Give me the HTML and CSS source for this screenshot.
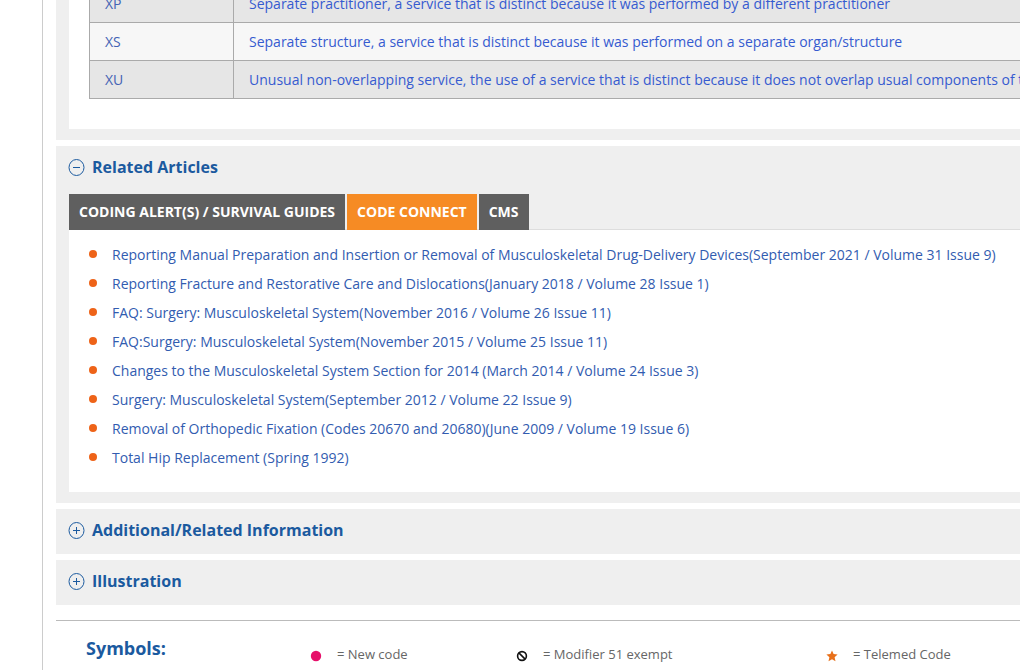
FILE: index.html
```html
<!DOCTYPE html>
<html lang="en">
<head>
<meta charset="utf-8">
<title>Code details</title>
<link rel="stylesheet" href="styles.css">
</head>
<body>
<main class="page">
  <section class="section modifiers">
    <div class="panel table-panel">
      <table class="modifier-table">
        <tbody>
          <tr><td class="code"><a href="#">XP</a></td><td><a href="#">Separate practitioner, a service that is distinct because it was performed by a different practitioner</a></td></tr>
          <tr><td class="code"><a href="#">XS</a></td><td><a href="#">Separate structure, a service that is distinct because it was performed on a separate organ/structure</a></td></tr>
          <tr><td class="code"><a href="#">XU</a></td><td><a href="#">Unusual non-overlapping service, the use of a service that is distinct because it does not overlap usual components of the main service</a></td></tr>
        </tbody>
      </table>
    </div>
  </section>

  <section class="section articles">
    <h2 class="heading"><button class="toggle" type="button" aria-expanded="true">
      <svg class="toggle-icon" viewBox="0 0 17 18" aria-hidden="true"><ellipse cx="8.5" cy="9.500" rx="7.500" ry="8"/><path d="M5 9.500h7"/></svg>Related Articles</button></h2>
    <div class="tabs" role="tablist">
      <button class="tab" type="button" role="tab">CODING ALERT(S) / SURVIVAL GUIDES</button>
      <button class="tab active" type="button" role="tab" aria-selected="true">CODE CONNECT</button>
      <button class="tab" type="button" role="tab">CMS</button>
    </div>
    <div class="panel article-panel">
      <ul class="article-list">
        <li><a href="#">Reporting Manual Preparation and Insertion or Removal of Musculoskeletal Drug-Delivery Devices(September 2021 / Volume 31 Issue 9)</a></li>
        <li><a href="#">Reporting Fracture and Restorative Care and Dislocations(January 2018 / Volume 28 Issue 1)</a></li>
        <li><a href="#">FAQ: Surgery: Musculoskeletal System(November 2016 / Volume 26 Issue 11)</a></li>
        <li><a href="#">FAQ:Surgery: Musculoskeletal System(November 2015 / Volume 25 Issue 11)</a></li>
        <li><a href="#">Changes to the Musculoskeletal System Section for 2014 (March 2014 / Volume 24 Issue 3)</a></li>
        <li><a href="#">Surgery: Musculoskeletal System(September 2012 / Volume 22 Issue 9)</a></li>
        <li><a href="#">Removal of Orthopedic Fixation (Codes 20670 and 20680)(June 2009 / Volume 19 Issue 6)</a></li>
        <li><a href="#">Total Hip Replacement (Spring 1992)</a></li>
      </ul>
    </div>
  </section>

  <section class="section collapsed">
    <h2 class="heading"><button class="toggle" type="button" aria-expanded="false">
      <svg class="toggle-icon" viewBox="0 0 17 18" aria-hidden="true"><ellipse cx="8.5" cy="9.500" rx="7.500" ry="8"/><path d="M5 9.500h7M8.500 6v7"/></svg>Additional/Related Information</button></h2>
  </section>

  <section class="section collapsed">
    <h2 class="heading"><button class="toggle" type="button" aria-expanded="false">
      <svg class="toggle-icon" viewBox="0 0 17 18" aria-hidden="true"><ellipse cx="8.5" cy="9.500" rx="7.500" ry="8"/><path d="M5 9.500h7M8.500 6v7"/></svg>Illustration</button></h2>
  </section>

  <footer class="symbols">
    <h3 class="symbols-title">Symbols:</h3>
    <ul class="legend">
      <li><svg class="symbol" viewBox="0 0 12 12" aria-hidden="true"><circle cx="6" cy="6" r="5.2" fill="#e6106a"/></svg>= New code</li>
      <li><svg class="symbol" viewBox="0 0 12 12" aria-hidden="true"><g fill="none" stroke="#111" stroke-width="1.6"><circle cx="6" cy="6" r="4.4"/><path d="M2.9 2.9l6.2 6.2"/></g></svg>= Modifier 51 exempt</li>
      <li><svg class="symbol" viewBox="0 0 12 12" aria-hidden="true"><path fill="#e8701a" d="M6 .5l1.600 3.600 4 .4-3 2.700.9 4L6 9.200l-3.500 2 .9-4-3-2.700 4-.4z"/></svg>= Telemed Code</li>
    </ul>
  </footer>
</main>
</body>
</html>
```
FILE: styles.css
```css
* {
  box-sizing: border-box;
}

body {
  display: flow-root;
  margin: 0;
  height: 100vh;
  overflow: hidden;
  background: #fff;
  color: #666;
  font: 14px/20px "Open Sans", "Noto Sans", sans-serif;
}

a {
  color: #325cb0;
  text-decoration: none;
}

ul {
  list-style: none;
  margin: 0;
  padding: 0;
}

.page {
  display: flow-root;
  margin-left: 42px;
  padding-left: 13px;
  border-left: 1px solid #ccc;
  min-height: 100%;
}

.section {
  background: #efefef;
  padding-left: 13px;
  margin-bottom: 6px;
}

.modifiers {
  margin-top: -16px;
  padding-bottom: 11px;
}

.panel {
  background: #fff;
}

.table-panel {
  padding: 0 0 30px 20px;
  overflow: hidden;
}

.modifier-table {
  width: 100%;
  border-collapse: collapse;
  white-space: nowrap;
}

.modifier-table td {
  height: 38px;
  padding: 0 15px;
  border: 1px solid #aaa;
  background: #e6e6e6;
}

.modifier-table tr:nth-child(even) td {
  background: #f7f7f7;
}

.modifier-table .code {
  width: 144px;
  min-width: 144px;
}

.modifier-table a {
  color: #365bd0;
}

.modifier-table .code a {
  color: #4463b4;
}

.heading {
  margin: 0;
  font-size: 16px;
  line-height: 24px;
}

.toggle {
  display: flex;
  align-items: center;
  gap: 7px;
  padding: 0;
  border: 0;
  background: none;
  color: #1b5a9f;
  font: inherit;
}

.toggle-icon {
  width: 17px;
  height: 18px;
  margin-left: -1px;
  fill: none;
  stroke: #1b5a9f;
  stroke-width: 1;
}

.articles {
  padding-top: 9px;
  padding-bottom: 11px;
}

.tabs {
  display: flex;
  gap: 2px;
  margin-top: 15px;
  border-bottom: 1px solid #ddd;
}

.tab {
  height: 36px;
  margin-bottom: -1px;
  padding: 0 10px;
  border: 0;
  background: #5f5f5f;
  color: #fff;
  font: bold 14px/20px "Open Sans", "Noto Sans", sans-serif;
  white-space: nowrap;
}

.tab.active {
  background: #f68b24;
}

.article-panel {
  padding: 10px 0 20px 20px;
}

.article-list li {
  display: flex;
  align-items: center;
  gap: 15px;
  height: 29px;
  white-space: nowrap;
}

.article-list li::before {
  content: "";
  width: 8px;
  height: 8px;
  margin-bottom: 2px;
  border-radius: 50%;
  background: #ee6318;
}

.collapsed {
  padding-top: 9px;
  padding-bottom: 12px;
}

.symbols {
  display: flex;
  margin-top: 15px;
  padding: 15px 0 0 30px;
  border-top: 1px solid #bbb;
}

.symbols-title {
  flex: 0 0 224px;
  margin: 0;
  color: #1b5a9f;
  font-size: 18px;
  line-height: 24px;
}

.legend {
  flex: 1;
  display: grid;
  grid-template-columns: 206px 310px 1fr;
  padding-top: 8px;
  font-size: 13px;
  white-space: nowrap;
}

.legend li {
  display: flex;
  align-items: center;
  gap: 15px;
}

.symbol {
  width: 12px;
  height: 12px;
  margin-top: 4px;
}
```
